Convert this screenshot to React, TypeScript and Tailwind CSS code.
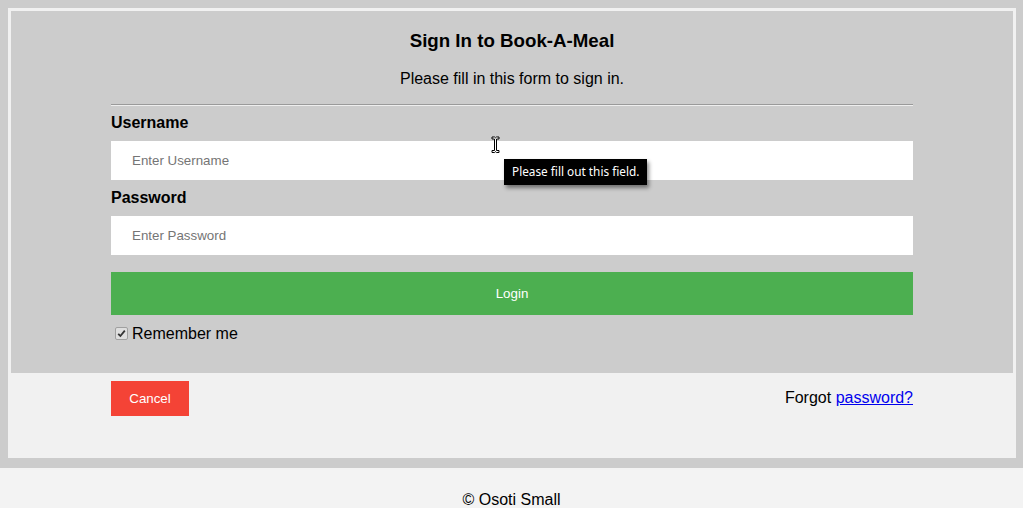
import React from "react";

export default function App() {
  return (
    <div className="relative min-h-[508px] bg-[#cccccc] font-['Liberation_Sans',Arial,sans-serif] text-black overflow-hidden">
      <div className="pt-[8px] pl-[8px]">
        <div className="w-[1008px] border-[3px] border-[#f1f1f1]">
          <div className="h-[362px] bg-[#cccccc] px-[100px] pt-[19px]">
            <h3 className="text-center text-[18.72px] leading-[21px] font-bold">Sign In to Book-A-Meal</h3>
            <p className="mt-[19px] text-center text-[16px] leading-[18px]">Please fill in this form to sign in.</p>
            <div className="mt-[16px] h-[2px] border-t border-b border-t-[#9a9a9a] border-b-[#eeeeee]" />
            <div className="mt-[8px] text-[16px] leading-[18px] font-bold">Username</div>
            <div className="mt-[9px] h-[39px] bg-white pl-[21px] flex items-center text-[13.33px] text-[#757575]">Enter Username</div>
            <div className="mt-[9px] text-[16px] leading-[18px] font-bold">Password</div>
            <div className="mt-[9px] h-[39px] bg-white pl-[21px] flex items-center text-[13.33px] text-[#757575]">Enter Password</div>
            <div className="mt-[17px] h-[43px] bg-[#4caf50] flex items-center justify-center text-white text-[13.33px]">Login</div>
            <div className="mt-[10px] flex items-center text-[16px] leading-[18px]">
              <span className="ml-[4px] mr-[4px] mt-[-1px] w-[13px] h-[13px] rounded-[2px] bg-[#dedede] border border-[#a0a0a0] flex items-center justify-center">
                <svg width="9" height="9" viewBox="0 0 9 9">
                  <path d="M1.2 4.8 L3.4 7 L7.8 1.6" fill="none" stroke="#333333" strokeWidth="1.8" />
                </svg>
              </span>
              <span>Remember me</span>
            </div>
          </div>
          <div className="h-[82px] bg-[#f1f1f1] px-[100px] pt-[8px] flex justify-between items-start">
            <div className="w-[78px] h-[35px] bg-[#f44336] flex items-center justify-center text-white text-[13.33px]">Cancel</div>
            <div className="pt-[8px] text-[16px] leading-[18px]">
              Forgot <a href="#" className="text-[#0000ee] underline">password?</a>
            </div>
          </div>
        </div>
      </div>
      <div className="mt-[10px] h-[40px] bg-[#f3f3f3] pt-[23px] text-center text-[16px] leading-[18px]">© Osoti Small</div>

      <div className="absolute left-[504px] top-[159px] h-[26px] px-[8px] bg-black text-white text-[11.8px] leading-[25px] font-['Noto_Sans',sans-serif] whitespace-nowrap shadow-[2px_3px_4px_rgba(0,0,0,0.45)]">
        Please fill out this field.
      </div>
      <svg className="absolute left-[491px] top-[136px]" width="9" height="18" viewBox="0 0 9 18">
        <path
          d="M1 1 H3.6 L4.5 1.8 L5.4 1 H8 V3 H5.5 V14.5 H8 V16.5 H5.4 L4.5 15.7 L3.6 16.5 H1 V14.5 H3.5 V3 H1 Z"
          fill="white"
          stroke="black"
          strokeWidth="1"
        />
      </svg>
    </div>
  );
}
